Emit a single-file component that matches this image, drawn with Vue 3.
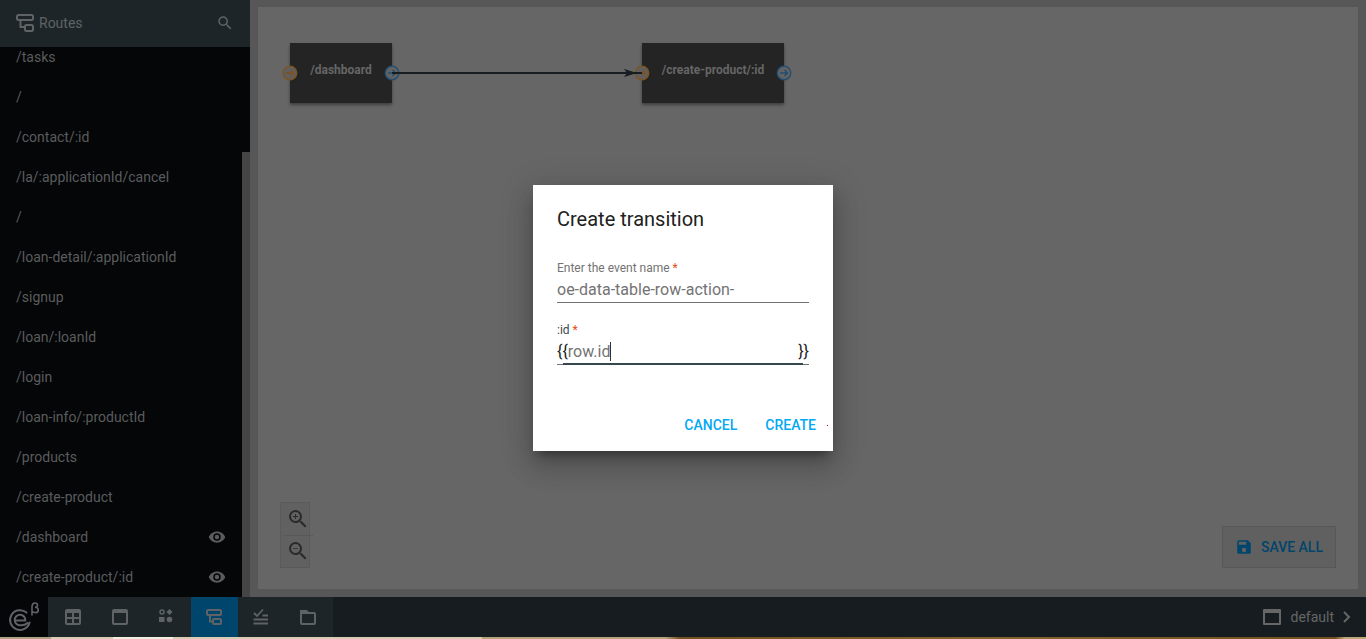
<script setup>
import { ref } from 'vue'

const routes = [
  { path: '/tasks' },
  { path: '/' },
  { path: '/contact/:id' },
  { path: '/la/:applicationId/cancel' },
  { path: '/' },
  { path: '/loan-detail/:applicationId' },
  { path: '/signup' },
  { path: '/loan/:loanId' },
  { path: '/login' },
  { path: '/loan-info/:productId' },
  { path: '/products' },
  { path: '/create-product' },
  { path: '/dashboard', shown: true },
  { path: '/create-product/:id', shown: true },
]
const eventName = ref('oe-data-table-row-action-')
const idValue = ref('row.id')
const open = '{{'
const close = '}' + '}'
</script>

<template>
  <div class="app">
    <div class="workspace">
      <aside class="sidebar">
        <header class="side-head">
          <svg class="route-icon" width="18" height="18" viewBox="0 0 18 18"><g fill="none" stroke="currentColor" stroke-width="2"><rect x="1" y="1" width="16" height="5" rx="1.5" /><rect x="9" y="11" width="8" height="6" rx="1.5" /><path d="M4.500 6v7H9" /></g></svg>
          <h1>Routes</h1>
          <button class="plain" aria-label="Search routes">
            <svg width="18" height="18" viewBox="0 0 24 24"><path fill="currentColor" d="M15.5 14h-.79l-.28-.27A6.470 6.470 0 0 0 16 9.500 6.500 6.500 0 1 0 9.500 16c1.610 0 3.090-.59 4.230-1.570l.27.28v.79l5 4.990L20.490 19l-4.990-5zm-6 0C7.010 14 5 11.990 5 9.500S7.010 5 9.500 5 14 7.010 14 9.500 11.990 14 9.500 14z" /></svg>
          </button>
        </header>
        <nav class="routes">
          <a v-for="(r, i) in routes" :key="i" href="#">
            <span>{{ r.path }}</span>
            <svg v-if="r.shown" width="18" height="18" viewBox="0 0 24 24"><path fill="currentColor" d="M12 4.500C7 4.500 2.730 7.610 1 12c1.730 4.390 6 7.500 11 7.500s9.270-3.110 11-7.500c-1.730-4.390-6-7.500-11-7.500zM12 17a5 5 0 1 1 0-10 5 5 0 0 1 0 10zm0-8a3 3 0 1 0 0 6 3 3 0 0 0 0-6z" /></svg>
          </a>
          <div class="thumb"></div>
        </nav>
      </aside>

      <main class="stage">
        <div class="canvas">
          <div class="node dashboard">/dashboard</div>
          <div class="node product">/create-product/:id</div>
          <svg class="links" width="560" height="80" viewBox="0 0 560 80">
            <g fill="none" stroke-width="1.300">
              <g stroke="#80521e"><circle cx="32" cy="40" r="6.800" fill="#5f5f5f" /><path d="M28 40h7.500M32.500 37l3 3-3 3" /></g>
              <g stroke="#1f4d73"><circle cx="134" cy="40" r="6.800" fill="#626262" /><path d="M130 40h7.500M134.500 37l3 3-3 3" /></g>
              <g stroke="#80521e"><circle cx="384" cy="40" r="6.800" fill="#5f5f5f" /><path d="M380 40h7.500M384.500 37l3 3-3 3" /></g>
              <g stroke="#1f4d73"><circle cx="526" cy="40" r="6.800" fill="#626262" /><path d="M522 40h7.500M526.500 37l3 3-3 3" /></g>
            </g>
            <path d="M134 40H384" stroke="#171d20" stroke-width="2" />
            <path d="M366 36L379 40L366 44L369 40Z" fill="#171d20" />
          </svg>
          <div class="zoom">
            <button aria-label="Zoom in">
              <svg width="24" height="24" viewBox="0 0 24 24"><path fill="currentColor" d="M15.500 14h-.79l-.28-.27A6.470 6.470 0 0 0 16 9.500 6.500 6.500 0 1 0 9.500 16c1.610 0 3.090-.59 4.230-1.570l.27.28v.79l5 4.990L20.490 19l-4.990-5zm-6 0C7.010 14 5 11.990 5 9.500S7.010 5 9.500 5 14 7.010 14 9.500 11.990 14 9.500 14z" /><path fill="currentColor" d="M12 10h-2v2H9v-2H7V9h2V7h1v2h2v1z" /></svg>
            </button>
            <hr>
            <button aria-label="Zoom out">
              <svg width="24" height="24" viewBox="0 0 24 24"><path fill="currentColor" d="M15.500 14h-.79l-.28-.27A6.470 6.470 0 0 0 16 9.500 6.500 6.500 0 1 0 9.500 16c1.610 0 3.090-.59 4.230-1.570l.27.28v.79l5 4.990L20.490 19l-4.990-5zm-6 0C7.010 14 5 11.990 5 9.500S7.010 5 9.500 5 14 7.010 14 9.500 11.990 14 9.500 14z" /><path fill="currentColor" opacity=".7" d="M7 9h5v1H7z" /></svg>
            </button>
          </div>
          <button class="save">
            <svg width="18" height="18" viewBox="0 0 24 24"><path fill="currentColor" d="M17 3H5a2 2 0 0 0-2 2v14a2 2 0 0 0 2 2h14c1.100 0 2-.9 2-2V7l-4-4zm-5 16a3 3 0 1 1 0-6 3 3 0 0 1 0 6zm3-10H5V5h10v4z" /></svg>
            <span>SAVE ALL</span>
          </button>
        </div>
      </main>
    </div>

    <footer class="bar">
      <a class="logo" href="#" aria-label="Home">
        <svg width="34" height="34" viewBox="0 0 34 34"><g fill="none" stroke="currentColor" stroke-linecap="round"><path stroke-width="2" d="M18.500 12.600A9.900 9.900 0 1 0 21.600 22.500" /><path stroke-width="2" d="M8.500 20.500H17.300A5.300 5.300 0 1 0 12.500 25.300Q17 25.500 19.500 23" /><path stroke-width="1.600" d="M24 15V6.500Q24.200 3 27 3Q29.500 3 29.500 5.200Q29.500 7.200 27 7.200Q30.300 7.500 30.300 10Q30.300 12.600 27.500 12.600Q25.500 12.600 24.500 11.500" /></g></svg>
      </a>
      <nav class="tabs">
        <button aria-label="Layouts"><svg width="18" height="18" viewBox="0 0 18 18"><path fill="none" stroke="currentColor" stroke-width="2" d="M3 2h12q1 0 1 1v12q0 1-1 1H3q-1 0-1-1V3q0-1 1-1zM9 4v12M2 10h14" /><path fill="currentColor" d="M2 2h14v3H2z" /></svg></button>
        <button aria-label="Pages"><svg width="18" height="18" viewBox="0 0 18 18"><path fill="none" stroke="currentColor" stroke-width="2" d="M3 2h12q1 0 1 1v12q0 1-1 1H3q-1 0-1-1V3q0-1 1-1z" /><path fill="currentColor" d="M2 2h14v3H2z" /></svg></button>
        <button aria-label="Components"><svg width="18" height="18" viewBox="0 0 18 18"><circle cx="4" cy="4" r="2" fill="none" stroke="currentColor" stroke-width="1.500" /><path fill="currentColor" d="M11.500 1l3 3-3 3-3-3zM1 9h5.500v5H1z" /><circle cx="11.500" cy="11.500" r="2.800" fill="currentColor" /></svg></button>
        <button class="active" aria-label="Routes"><svg width="18" height="18" viewBox="0 0 18 18"><g fill="none" stroke="currentColor" stroke-width="2"><rect x="2" y="2" width="14" height="5" rx="1" /><rect x="8" y="11" width="8" height="5" rx="1" /><path d="M5 7v6.500h3" /></g></svg></button>
        <button aria-label="Checks"><svg width="18" height="18" viewBox="0 0 18 18"><path fill="none" stroke="currentColor" stroke-width="1.800" d="M2 5l3 3 6-6.500M10.500 7.500H16M1.500 11.500H16M1.500 15.500H16" /></svg></button>
        <button aria-label="Files"><svg width="18" height="18" viewBox="0 0 18 18"><path fill="none" stroke="currentColor" stroke-width="2" d="M2 3v12q0 1 1 1h12q1 0 1-1V6q0-1-1-1H9L7 3z" /><path fill="currentColor" d="M1 3q0-1 1-1h5.500L10 4v2H1z" /></svg></button>
      </nav>
      <button class="target">
        <svg width="18" height="16" viewBox="0 0 18 16"><path fill="currentColor" fill-rule="evenodd" d="M1 0h16q1 0 1 1v14q0 1-1 1H1q-1 0-1-1V1q0-1 1-1zM2 4v10h14V4z" /></svg>
        <span>default</span>
        <svg width="8" height="12" viewBox="0 0 8 12"><path fill="none" stroke="currentColor" stroke-width="2" d="M1 1l5 5-5 5" /></svg>
      </button>
    </footer>
    <div class="strip"></div>

    <div class="modal">
      <form class="dialog" role="dialog" aria-labelledby="dialog-title" @submit.prevent>
        <h2 id="dialog-title">Create transition</h2>
        <div class="field">
          <label for="event-name">Enter the event name <i>*</i></label>
          <div class="line"><input id="event-name" v-model="eventName" class="wide" type="text"></div>
        </div>
        <div class="field focused">
          <label for="param-id">:id <i>*</i></label>
          <div class="line">
            <span>{{ open }}</span><input id="param-id" v-model="idValue" class="fit" type="text"><span class="caret"></span><span class="suffix">{{ close }}</span>
          </div>
        </div>
        <div class="actions">
          <button type="button">CANCEL</button>
          <button type="submit">CREATE</button>
          <span class="dot"></span>
        </div>
      </form>
    </div>
  </div>
</template>

<style>
body { margin: 0; overflow: hidden; }
</style>

<style scoped>
* { box-sizing: border-box; }
.app { height: 100vh; display: flex; flex-direction: column; font-family: Roboto, "Liberation Sans", sans-serif; font-size: 14px; color: #5f6365; background: #575757; }
button { font: inherit; color: inherit; background: none; border: 0; padding: 0; display: flex; align-items: center; }
svg { flex: none; display: block; }
a { color: inherit; text-decoration: none; }
.workspace { flex: 1; min-height: 0; display: flex; }
.sidebar { width: 250px; flex: none; display: flex; flex-direction: column; background: #040608; }
.side-head { flex: none; height: 47px; padding: 0 16px 1px; display: flex; align-items: center; gap: 5px; background: #1d2528; }
.side-head h1 { flex: 1; margin: 0; font-size: 14px; font-weight: 400; }
.routes { position: relative; flex: 1; min-height: 0; overflow: hidden; display: flex; flex-direction: column; justify-content: flex-end; color: #5b5c5d; }
.routes a { flex: none; height: 40px; padding: 0 24px 0 16px; display: flex; align-items: center; justify-content: space-between; }
.thumb { position: absolute; right: 0; top: 105px; bottom: 0; width: 8px; background: #454545; }
.stage { flex: 1; min-width: 0; padding: 7px 8px 8px; display: flex; }
.canvas { position: relative; flex: 1; background: #666; }
.node { position: absolute; top: 36px; height: 60px; padding: 0 0 6px; display: flex; align-items: center; justify-content: center; white-space: nowrap; font-size: 12px; font-weight: 700; color: #666; background: #242424; box-shadow: 0 2px 3px rgba(0, 0, 0, .4); }
.dashboard { left: 32px; width: 102px; }
.product { left: 384px; width: 142px; }
.links { position: absolute; left: 0; top: 26px; }
.zoom { position: absolute; left: 22px; bottom: 21px; width: 30px; height: 66px; border: 1px solid #5a5a5a; background: #616161; color: #2a2a2a; display: flex; flex-direction: column; }
.zoom button { flex: 1; padding-left: 5px; }
.zoom hr { width: 30px; height: 1px; margin: 0 0 0 2px; border: 0; background: #585858; flex: none; }
.save { position: absolute; right: 22px; bottom: 21px; height: 42px; padding: 0 12px; gap: 8px; border: 1px solid #575757; background: #606060; color: #00456b; font-weight: 500; }
.bar { flex: none; height: 40px; display: flex; background: #171c20; color: #5f6365; }
.logo { width: 48px; background: #040608; display: flex; align-items: center; justify-content: flex-end; padding: 0 6px 0 0; }
.tabs { display: flex; padding: 0 1px 0 2px; background: #1d2528; }
.tabs button { width: 47px; justify-content: center; padding-right: 2px; }
.tabs .active { background: #00456b; }
.target { margin-left: auto; padding-right: 15px; gap: 9px; color: #666; }
.strip { flex: none; height: 2px; background: linear-gradient(90deg, #b0a284 0 51px, #d6cdb4 51px 113px, #f3eddf 113px 173px, #d6cdb4 173px 482px, #b5a37c 482px 665px, #71511f 680px, #82642e 1000px, #71511f 1335px, #bba878 1345px); }
.modal { position: absolute; inset: 0; display: flex; align-items: center; justify-content: center; padding-bottom: 3px; }
.dialog { width: 300px; padding: 24px; background: #fff; box-shadow: 0 16px 24px 2px rgba(0, 0, 0, .14), 0 6px 30px 5px rgba(0, 0, 0, .12), 0 8px 10px -5px rgba(0, 0, 0, .4); color: #212121; }
.dialog h2 { margin: 0 0 28px; font-size: 20px; line-height: 21px; font-weight: 400; }
.field { height: 62px; color: #737373; }
.field label { display: block; font-size: 12px; line-height: 20px; }
.field i { font-style: normal; color: #e64a19; }
.line { height: 25px; padding-bottom: 2px; display: flex; align-items: center; border-bottom: 1px solid #737373; font-size: 16px; }
.line span { color: #212121; }
.line input { font: inherit; color: #737373; border: 0; outline: 0; padding: 0; background: none; }
.line .wide { width: 100%; }
.line .fit { field-sizing: content; }
.line .caret { width: 1px; height: 19px; background: #333; }
.line .suffix { margin-left: auto; }
.focused .line { position: relative; }
.focused .line::after { content: ""; position: absolute; left: 6px; right: 6px; bottom: -1px; height: 2px; background: #37474f; }
.focused label { color: #37474f; }
.actions { display: flex; justify-content: flex-end; align-items: center; gap: 28px; height: 36px; margin: 25px -7px -16px 0; color: #03a9f4; font-weight: 500; position: relative; }
.dot { position: absolute; right: -12px; top: 18px; width: 1px; height: 1px; background: #d50000; }
</style>
